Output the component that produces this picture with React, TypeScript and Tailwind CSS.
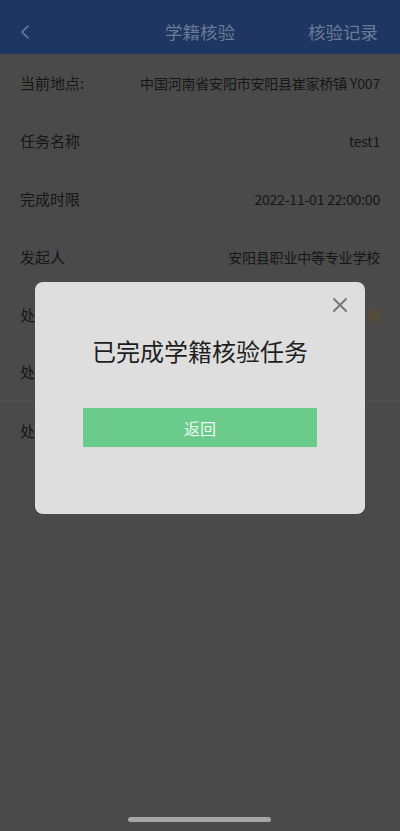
import React from 'react';

const rows: { label: string; value: string; accent?: boolean; divider?: boolean }[] = [
  { label: '当前地点:', value: '中国河南省安阳市安阳县崔家桥镇 Y007' },
  { label: '任务名称', value: 'test1' },
  { label: '完成时限', value: '2022-11-01 22:00:00' },
  { label: '发起人', value: '安阳县职业中等专业学校' },
  { label: '处理状态', value: '待处理', accent: true },
  { label: '处理时间', value: '', divider: true },
  { label: '处理结果', value: '' },
];

export default function App() {
  return (
    <div
      className="relative w-[400px] h-[831px] overflow-hidden bg-[#4a4a4a]"
      style={{ fontFamily: '"Noto Sans CJK SC", "Noto Sans", sans-serif' }}
    >
      {/* 顶部导航 */}
      <div className="h-[54px] bg-[#1f3562] grid grid-cols-[1fr_auto_1fr] items-center px-[18px] pt-[10px] text-[#6b7b96]">
        <svg width="14" height="16" viewBox="0 0 14 16" className="ml-[1px]">
          <path d="M9 2 L3 8 L9 14" fill="none" stroke="#6b7b96" strokeWidth="1.6" strokeLinecap="round" strokeLinejoin="round" />
        </svg>
        <div className="text-[17.5px]">学籍核验</div>
        <div className="text-[17.5px] justify-self-end mr-[4px]">核验记录</div>
      </div>

      {/* 信息列表 */}
      <div>
        {rows.map((r) => (
          <div
            key={r.label}
            className={`h-[58px] flex items-center justify-between pl-[20px] pr-[20px] ${r.divider ? 'border-b border-[#525252]' : ''}`}
          >
            <span className="text-[15px] text-[#161616]">{r.label}</span>
            <span className={`text-[14px] tracking-[-0.2px] ${r.accent ? 'text-[#5e4d28]' : 'text-[#161616]'}`}>{r.value}</span>
          </div>
        ))}
      </div>

      {/* 弹窗 */}
      <div className="absolute inset-0 pt-[282px]">
        <div className="relative mx-auto w-[330px] h-[232px] rounded-[8px] bg-[#dedede] flex flex-col items-center">
          <button className="absolute right-[16px] top-[14px] w-[18px] h-[18px] flex items-center justify-center">
            <svg width="16" height="16" viewBox="0 0 16 16">
              <path d="M2 2 L14 14 M14 2 L2 14" stroke="#7a7a7a" strokeWidth="2" strokeLinecap="round" />
            </svg>
          </button>
          <div className="mt-[53px] text-[24px] leading-[32px] text-[#1e1e1e]">已完成学籍核验任务</div>
          <button className="mt-[41px] w-[234px] h-[39px] bg-[#6bcb8b] text-[#eef7f0] text-[16px]">返回</button>
        </div>
      </div>

      {/* Home 指示条 */}
      <div className="absolute left-[128px] top-[817px] w-[143px] h-[5px] rounded-full bg-[#a6a6a6]" />
    </div>
  );
}
